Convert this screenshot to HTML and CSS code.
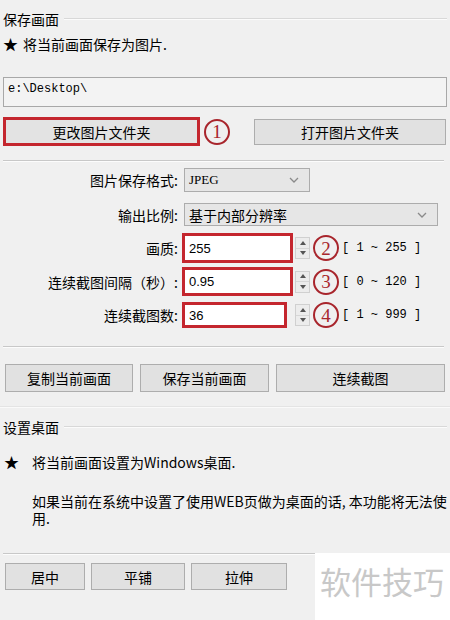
FILE: index.html
```html
<!DOCTYPE html>
<html lang="zh-CN">
<head>
    <meta charset="UTF-8">
    <meta name="viewport" content="width=device-width, initial-scale=1.0">
    <title>保存画面</title>
    <link rel="stylesheet" href="styles.css">
</head>
<body>
    <div class="dialog">
        <div class="group-title"><span>保存画面</span></div>
        <p class="star-line"><span class="star">★</span>将当前画面保存为图片.</p>
        <div class="path-box">e:\Desktop\</div>
        <div class="folder-row">
            <button class="btn marked folder-change">更改图片文件夹</button>
            <span class="mark">1</span>
            <button class="btn folder-open">打开图片文件夹</button>
        </div>

        <div class="sep"></div>

        <div class="field field-format">
            <label>图片保存格式:</label>
            <div class="select select-short"><span class="latin">JPEG</span><svg width="10" height="6" viewBox="0 0 10 6"><polyline points="1,1 5,5 9,1" fill="none" stroke="#8a8a8a" stroke-width="1.3"/></svg></div>
        </div>
        <div class="field field-scale">
            <label>输出比例:</label>
            <div class="select select-long"><span>基于内部分辨率</span><svg width="10" height="6" viewBox="0 0 10 6"><polyline points="1,1 5,5 9,1" fill="none" stroke="#8a8a8a" stroke-width="1.3"/></svg></div>
        </div>
        <div class="field field-quality">
            <label>画质:</label>
            <div class="num">255</div>
            <div class="spin"><i class="up"></i><i class="down"></i></div>
            <span class="mark">2</span>
            <span class="range">[ 1 ~ 255 ]</span>
        </div>
        <div class="field field-interval">
            <label>连续截图间隔（秒）:</label>
            <div class="num">0.95</div>
            <div class="spin"><i class="up"></i><i class="down"></i></div>
            <span class="mark">3</span>
            <span class="range">[ 0 ~ 120 ]</span>
        </div>
        <div class="field field-count">
            <label>连续截图数:</label>
            <div class="num narrow">36</div>
            <div class="spin"><i class="up"></i><i class="down"></i></div>
            <span class="mark">4</span>
            <span class="range">[ 1 ~ 999 ]</span>
        </div>

        <div class="sep sep-actions"></div>

        <div class="action-row">
            <button class="btn act-copy">复制当前画面</button>
            <button class="btn act-save">保存当前画面</button>
            <button class="btn act-burst">连续截图</button>
        </div>

        <div class="sep sep-light"></div>

        <div class="group-title second"><span>设置桌面</span></div>
        <p class="star-line wide"><span class="star">★</span>将当前画面设置为Windows桌面.</p>
        <p class="note">如果当前在系统中设置了使用WEB页做为桌面的话, 本功能将无法使用.</p>

        <div class="sep sep-wall"></div>

        <div class="wall-row">
            <button class="btn wall-center">居中</button>
            <button class="btn wall-tile">平铺</button>
            <button class="btn wall-stretch">拉伸</button>
        </div>

        <div class="watermark">软件技巧</div>
    </div>
</body>
</html>
```

FILE: styles.css
```css
body {
    margin: 0;
    padding: 0;
    background-color: #f0f0f0;
    font-family: "Noto Sans CJK SC", "Noto Sans", sans-serif;
    font-size: 14px;
    color: #000;
}
.dialog {
    position: relative;
    width: 450px;
    height: 620px;
    overflow: hidden;
}
p {
    margin: 0;
}
.group-title {
    display: flex;
    align-items: center;
    gap: 5px;
    padding: 11px 3px 0 3px;
    line-height: 16px;
}
.group-title::after {
    content: "";
    flex: 1;
    border-top: 1px solid #d8d8d8;
    border-bottom: 1px solid #fbfbfb;
}
.group-title.second {
    padding-top: 11px;
}
.star-line {
    display: flex;
    align-items: center;
    margin-top: 9px;
    padding-left: 3px;
    line-height: 16px;
}
.star {
    width: 20px;
    font-size: 15px;
}
.star-line.wide {
    margin-top: 19px;
    padding-left: 4px;
    word-spacing: 0;
}
.star-line.wide .star {
    width: 28px;
}
.latin {
    font-family: "Liberation Serif", serif;
    font-size: 13px;
}
.path-box {
    margin: 25px 3px 0 3px;
    border: 1px solid #a8a8a8;
    background: #f3f3f3;
    padding: 3px 0 0 4px;
    box-sizing: border-box;
    height: 30px;
    font-family: "Liberation Mono", monospace;
    font-size: 12px;
    line-height: 16px;
}
.btn {
    font-family: "Noto Sans CJK SC", sans-serif;
    font-size: 14px;
    background: #e1e1e1;
    border: 1px solid #adadad;
    padding: 0;
    color: #000;
    box-sizing: border-box;
}
.btn.marked {
    border: 3px solid #c4262e;
    background: #e3e3e3;
}
.folder-row {
    display: flex;
    align-items: center;
    margin-top: 10px;
    padding-left: 3px;
    height: 29px;
}
.folder-change {
    width: 197px;
    height: 29px;
}
.folder-row .mark {
    margin-left: 4px;
}
.folder-open {
    margin-left: 24px;
    width: 192px;
    height: 26px;
}
.mark {
    display: inline-flex;
    align-items: center;
    justify-content: center;
    width: 22px;
    height: 22px;
    border: 2px solid #a8252c;
    border-radius: 50%;
    color: #a8252c;
    font-family: "Liberation Serif", serif;
    font-size: 19px;
    line-height: 1;
}
.sep {
    margin: 14px 6px 0 3px;
    border-top: 1px solid #c8c8c8;
    border-bottom: 1px solid #fcfcfc;
}
.field {
    display: flex;
    align-items: center;
}
.field label {
    width: 182px;
    padding-right: 4px;
    box-sizing: border-box;
    text-align: right;
    white-space: nowrap;
}
.field-format {
    margin-top: 6px;
    height: 24px;
}
.field-scale {
    margin-top: 11px;
    height: 23px;
}
.field-quality {
    margin-top: 7px;
    height: 30px;
}
.field-interval {
    margin-top: 4px;
    height: 29px;
}
.field-count {
    margin-top: 6px;
    height: 26px;
}
.select {
    display: flex;
    align-items: center;
    justify-content: space-between;
    margin-left: 2px;
    height: 100%;
    box-sizing: border-box;
    padding: 0 10px 0 4px;
    background: #e6e6e6;
    border: 1px solid #acacac;
}
.select-short {
    width: 126px;
}
.select-long {
    width: 254px;
}
.num {
    width: 111px;
    height: 100%;
    box-sizing: border-box;
    border: 3px solid #c4262e;
    background: #fff;
    padding-left: 4px;
    display: flex;
    align-items: center;
    font-family: "Liberation Sans", sans-serif;
    font-size: 13px;
}
.num.narrow {
    width: 105px;
}
.spin {
    display: flex;
    flex-direction: column;
    width: 15px;
    height: 22px;
    margin-left: 2px;
    border: 1px solid #d0d0d0;
    box-sizing: border-box;
    background: #ececec;
}
.num.narrow + .spin {
    margin-left: 8px;
}
.spin i {
    flex: 1;
    display: flex;
    align-items: center;
    justify-content: center;
}
.spin i::before {
    content: "";
    border-left: 3px solid transparent;
    border-right: 3px solid transparent;
}
.spin .up {
    border-bottom: 1px solid #d6d6d6;
}
.spin .up::before {
    border-bottom: 4px solid #555;
}
.spin .down::before {
    border-top: 4px solid #555;
}
.field .mark {
    margin-left: 3px;
}
.range {
    margin-left: 3px;
    font-family: "Liberation Mono", monospace;
    font-size: 12px;
    white-space: pre;
}
.sep-actions {
    margin-top: 18px;
}
.action-row {
    display: flex;
    margin-top: 16px;
    padding-left: 5px;
    gap: 7px;
}
.action-row .btn {
    height: 28px;
}
.act-copy {
    width: 128px;
}
.act-save {
    width: 129px;
}
.act-burst {
    width: 169px;
}
.sep-light {
    margin: 14px 0 0 0;
    border-top: 1px solid #e4e4e4;
    border-bottom: 1px solid #fafafa;
}
.note {
    margin-top: 23px;
    padding: 0 2px 0 32px;
    line-height: 17px;
}
.sep-wall {
    margin: 26px 0 0 3px;
}
.wall-row {
    display: flex;
    margin-top: 8px;
    padding-left: 5px;
    gap: 6px;
}
.wall-row .btn {
    height: 27px;
}
.wall-center {
    width: 80px;
}
.wall-tile {
    width: 94px;
}
.wall-stretch {
    width: 96px;
}
.watermark {
    position: absolute;
    left: 315px;
    top: 553px;
    right: 0;
    bottom: 0;
    background: #fff;
    color: #c8c8c8;
    font-size: 31px;
    padding: 8px 0 0 5px;
    line-height: 40px;
}
```
